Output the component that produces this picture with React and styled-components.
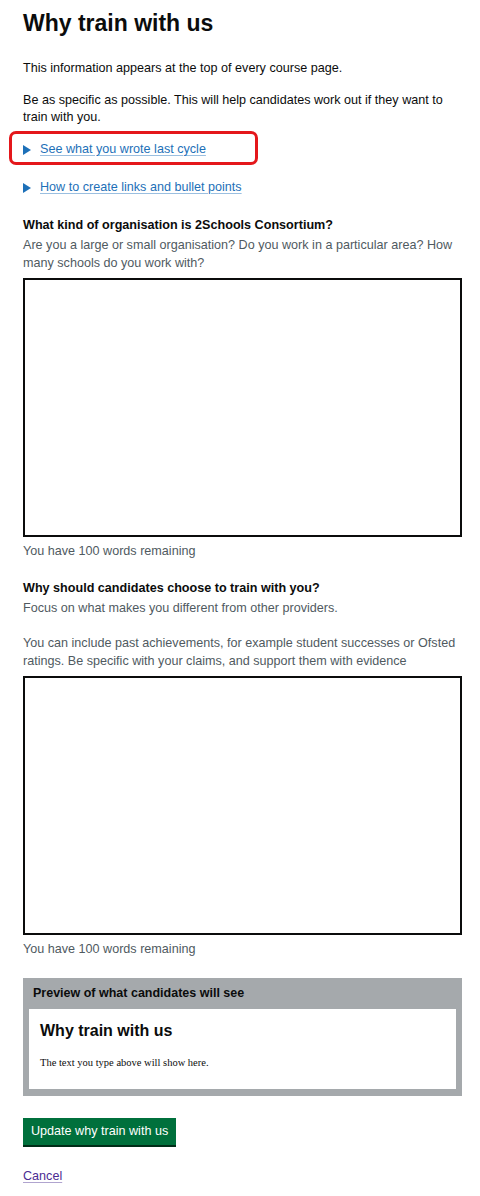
import React from "react"
import styled, { createGlobalStyle } from "styled-components"

const GlobalStyle = createGlobalStyle`
  body {
    margin: 0;
    background: #ffffff;
    font-family: "Liberation Sans", Arial, sans-serif;
    color: #0b0c0c;
  }
`

const Page = styled.main`
  padding: 8px 18px 20px 23px;
  display: flex;
  flex-direction: column;
`

const Title = styled.h1`
  margin: 0 0 22px;
  font-size: 23px;
  line-height: 30px;
  font-weight: 700;
`

const Body = styled.p`
  margin: 0 0 15px;
  font-size: 12.6px;
  line-height: 17px;
`

const Details = styled.div`
  position: relative;
  display: flex;
  align-items: center;
  gap: 9px;
  height: 17px;
  margin: ${(p) => (p.$first ? "0 0 21px" : "0 0 21px")};
`

const Highlight = styled.span`
  position: absolute;
  left: -14px;
  top: -10px;
  width: 243px;
  height: 28px;
  border: 3px solid #e4171b;
  border-radius: 7px;
  pointer-events: none;
`

const Triangle = styled.span`
  width: 0;
  height: 0;
  border-top: 5px solid transparent;
  border-bottom: 5px solid transparent;
  border-left: 8px solid #1d70b8;
`

const Link = styled.a`
  color: #1d70b8;
  font-size: 12.6px;
  line-height: 17px;
  text-decoration: underline;
  text-decoration-thickness: 1px;
  text-underline-offset: 2px;
  text-decoration-color: #9bbfe0;
`

const Field = styled.div`
  display: flex;
  flex-direction: column;
  margin-bottom: 20px;
`

const Label = styled.label`
  font-size: 12.6px;
  line-height: 17px;
  font-weight: 700;
  margin-bottom: 2px;
`

const Hint = styled.div`
  color: #505a5f;
  font-size: 12.6px;
  line-height: 18px;
  margin-bottom: ${(p) => p.$gap || 0}px;
`

const TextArea = styled.textarea`
  box-sizing: border-box;
  width: 100%;
  height: 259px;
  margin-top: 6px;
  border: 2px solid #0b0c0c;
  border-radius: 0;
  resize: none;
  font: inherit;
  display: block;
`

const Count = styled.div`
  color: #505a5f;
  font-size: 12.6px;
  line-height: 18px;
  margin-top: 5px;
`

const Preview = styled.section`
  background: #a5a9ac;
  padding: 6px 6px 7px;
`

const PreviewHeading = styled.div`
  font-size: 12.5px;
  font-weight: 700;
  line-height: 18px;
  padding: 0 4px 7px;
`

const PreviewCard = styled.div`
  background: #ffffff;
  padding: 11px 11px 19px;
`

const PreviewTitle = styled.h2`
  margin: 0 0 14px;
  font-size: 16px;
  line-height: 22px;
  font-weight: 700;
`

const PreviewText = styled.p`
  margin: 0;
  font-family: "Liberation Serif", "Times New Roman", serif;
  font-size: 10.5px;
  line-height: 14px;
`

const Button = styled.button`
  align-self: flex-start;
  margin-top: 22px;
  background: #00703c;
  color: #ffffff;
  border: 0;
  box-shadow: 0 2px 0 #002d18;
  font-family: inherit;
  font-size: 12.6px;
  line-height: 17px;
  padding: 5px 8px;
  height: 27px;
`

const Cancel = styled.a`
  align-self: flex-start;
  margin-top: 23px;
  color: #4c2c92;
  font-size: 12.6px;
  line-height: 17px;
  text-decoration: underline;
  text-decoration-thickness: 1px;
  text-underline-offset: 2px;
  text-decoration-color: #b0a4cf;
`

export default function App() {
  return (
    <>
      <GlobalStyle />
      <Page>
        <Title>Why train with us</Title>
        <Body>This information appears at the top of every course page.</Body>
        <Body>
          Be as specific as possible. This will help candidates work out if they want to
          train with you.
        </Body>

        <Details $first>
          <Highlight />
          <Triangle />
          <Link href="#">See what you wrote last cycle</Link>
        </Details>
        <Details>
          <Triangle />
          <Link href="#">How to create links and bullet points</Link>
        </Details>

        <Field>
          <Label>What kind of organisation is 2Schools Consortium?</Label>
          <Hint>
            Are you a large or small organisation? Do you work in a particular area? How
            many schools do you work with?
          </Hint>
          <TextArea aria-label="Organisation" />
          <Count>You have 100 words remaining</Count>
        </Field>

        <Field>
          <Label>Why should candidates choose to train with you?</Label>
          <Hint $gap={17}>Focus on what makes you different from other providers.</Hint>
          <Hint>
            You can include past achievements, for example student successes or Ofsted
            ratings. Be specific with your claims, and support them with evidence
          </Hint>
          <TextArea aria-label="Why train" />
          <Count>You have 100 words remaining</Count>
        </Field>

        <Preview>
          <PreviewHeading>Preview of what candidates will see</PreviewHeading>
          <PreviewCard>
            <PreviewTitle>Why train with us</PreviewTitle>
            <PreviewText>The text you type above will show here.</PreviewText>
          </PreviewCard>
        </Preview>

        <Button>Update why train with us</Button>
        <Cancel href="#">Cancel</Cancel>
      </Page>
    </>
  )
}
